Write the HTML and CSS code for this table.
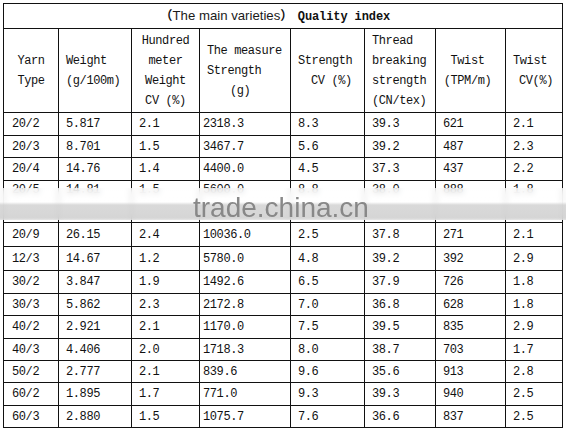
FILE: index.html
```html
<!DOCTYPE html>
<html>
<head>
<meta charset="utf-8">
<title>Quality index</title>
<link rel="stylesheet" href="styles.css">
</head>
<body>
<div class="page">
  <table class="spec">
    <colgroup>
      <col class="w1"><col class="w2"><col class="w3"><col class="w4">
      <col class="w5"><col class="w6"><col class="w7"><col class="w8">
    </colgroup>
    <tr class="title">
      <td colspan="8"><span class="paren">（</span><span class="title-sans">The main varieties</span><span class="paren">）</span><span class="title-bold">Quality index</span></td>
    </tr>
    <tr class="head">
      <td class="h-center">Yarn<br>Type</td>
      <td class="h-left">Weight<br>(g/100m)</td>
      <td class="h-center">Hundred<br>meter<br>Weight<br>CV (%)</td>
      <td class="h-left h-tall">The measure<br>Strength<br><span class="ind-g">(g)</span></td>
      <td class="h-left">Strength<br><span class="ind-cv">CV (%)</span></td>
      <td class="h-left">Thread<br>breaking<br>strength<br>(CN/tex)</td>
      <td class="h-center h-twist">Twist<br>(TPM/m)</td>
      <td class="h-left">Twist<br><span class="ind-cv2">CV(%)</span></td>
    </tr>
    <tr class="d r23"><td>20/2</td><td>5.817</td><td>2.1</td><td>2318.3</td><td>8.3</td><td>39.3</td><td>621</td><td>2.1</td></tr>
    <tr class="d r22"><td>20/3</td><td>8.701</td><td>1.5</td><td>3467.7</td><td>5.6</td><td>39.2</td><td>487</td><td>2.3</td></tr>
    <tr class="d r23"><td>20/4</td><td>14.76</td><td>1.4</td><td>4400.0</td><td>4.5</td><td>37.3</td><td>437</td><td>2.2</td></tr>
    <tr class="d cut"><td>20/5</td><td>14.81</td><td>1.5</td><td>5600.0</td><td>8.8</td><td>38.0</td><td>888</td><td>1.8</td></tr>
    <tr class="d r24"><td>20/9</td><td>26.15</td><td>2.4</td><td>10036.0</td><td>2.5</td><td>37.8</td><td>271</td><td>2.1</td></tr>
    <tr class="d r24"><td>12/3</td><td>14.67</td><td>1.2</td><td>5780.0</td><td>4.8</td><td>39.2</td><td>392</td><td>2.9</td></tr>
    <tr class="d r23"><td>30/2</td><td>3.847</td><td>1.9</td><td>1492.6</td><td>6.5</td><td>37.9</td><td>726</td><td>1.8</td></tr>
    <tr class="d r22"><td>30/3</td><td>5.862</td><td>2.3</td><td>2172.8</td><td>7.0</td><td>36.8</td><td>628</td><td>1.8</td></tr>
    <tr class="d r23"><td>40/2</td><td>2.921</td><td>2.1</td><td>1170.0</td><td>7.5</td><td>39.5</td><td>835</td><td>2.9</td></tr>
    <tr class="d r22"><td>40/3</td><td>4.406</td><td>2.0</td><td>1718.3</td><td>8.0</td><td>38.7</td><td>703</td><td>1.7</td></tr>
    <tr class="d r22"><td>50/2</td><td>2.777</td><td>2.1</td><td>839.6</td><td>9.6</td><td>35.6</td><td>913</td><td>2.8</td></tr>
    <tr class="d r23"><td>60/2</td><td>1.895</td><td>1.7</td><td>771.0</td><td>9.3</td><td>39.3</td><td>940</td><td>2.5</td></tr>
    <tr class="d r22"><td>60/3</td><td>2.880</td><td>1.5</td><td>1075.7</td><td>7.6</td><td>36.6</td><td>837</td><td>2.5</td></tr>
  </table>
  <div class="watermark"><span class="wm-text">trade.china.cn</span></div>
</div>
</body>
</html>
```

FILE: styles.css
```css
html, body {
  margin: 0;
  padding: 0;
  background: #ffffff;
}

.page {
  position: relative;
  width: 566px;
  height: 432px;
  padding: 3px 0 0 3px;
  box-sizing: border-box;
  overflow: hidden;
}

.spec {
  border-collapse: collapse;
  table-layout: fixed;
  width: 560px;
  font-family: "Liberation Mono", "DejaVu Sans Mono", monospace;
  font-size: 12px;
  letter-spacing: -0.4px;
  color: #111111;
}

.w1 { width: 55px; }
.w2 { width: 73px; }
.w3 { width: 68px; }
.w4 { width: 91px; }
.w5 { width: 74px; }
.w6 { width: 71px; }
.w7 { width: 70px; }
.w8 { width: 57px; }

.spec td {
  border: 1px solid #111111;
  padding: 0 0 0 7px;
  vertical-align: middle;
  white-space: nowrap;
  overflow: hidden;
  line-height: 20px;
}

.spec tr.d td:nth-child(4) {
  padding-left: 3px;
}
.spec tr.d td:first-child {
  padding-left: 8px;
}

.spec tr.title td {
  height: 24px;
  padding: 0 16px 0 0;
  text-align: center;
  line-height: 14px;
  letter-spacing: 0;
}

.paren {
  font-family: "Noto Sans CJK SC", sans-serif;
  font-size: 12.5px;
  line-height: 14px;
  font-weight: 700;
  color: #111;
}

.title-sans {
  font-family: "Liberation Sans", Arial, sans-serif;
  font-size: 13.2px;
  line-height: 14px;
  color: #1a1a1a;
}

.title-bold {
  font-family: "Liberation Mono", monospace;
  font-weight: 700;
  font-size: 12px;
  line-height: 14px;
  letter-spacing: -0.1px;
  margin-left: 5px;
}

.spec tr.head td {
  height: 83px;
  line-height: 20px;
}

.spec td.h-center {
  text-align: center;
  padding: 0;
}

.spec td.h-left {
  text-align: left;
  padding-left: 7px;
}

.spec td.h-tall {
  line-height: 23px;
}

.spec td.h-twist {
  padding-right: 6px;
}

.ind-g { padding-left: 23px; }
.ind-cv { padding-left: 13px; }
.ind-cv2 { padding-left: 6px; }

.spec tr.r22 td { height: 21px; }
.spec tr.r23 td { height: 22px; }
.spec tr.r24 td { height: 23px; }

.spec tr.cut td {
  height: 37px;
  vertical-align: top;
  padding-top: 4px;
  line-height: 10px;
}

.watermark {
  position: absolute;
  left: 0;
  top: 188px;
  width: 566px;
  height: 32px;
  backdrop-filter: blur(3px);
  -webkit-backdrop-filter: blur(3px);
  background: linear-gradient(to bottom,
    rgba(255,255,255,0.7) 0px,
    rgba(255,255,255,0.78) 14px,
    rgba(214,214,214,0.92) 17px,
    rgba(210,210,210,0.92) 30px,
    rgba(225,225,225,0.8) 32px);
}

.wm-text {
  display: block;
  margin-left: 193px;
  margin-top: 8px;
  font-family: "Liberation Sans", Arial, sans-serif;
  font-size: 28px;
  line-height: 24px;
  letter-spacing: 0;
  color: #888888;
  white-space: nowrap;
}
```
